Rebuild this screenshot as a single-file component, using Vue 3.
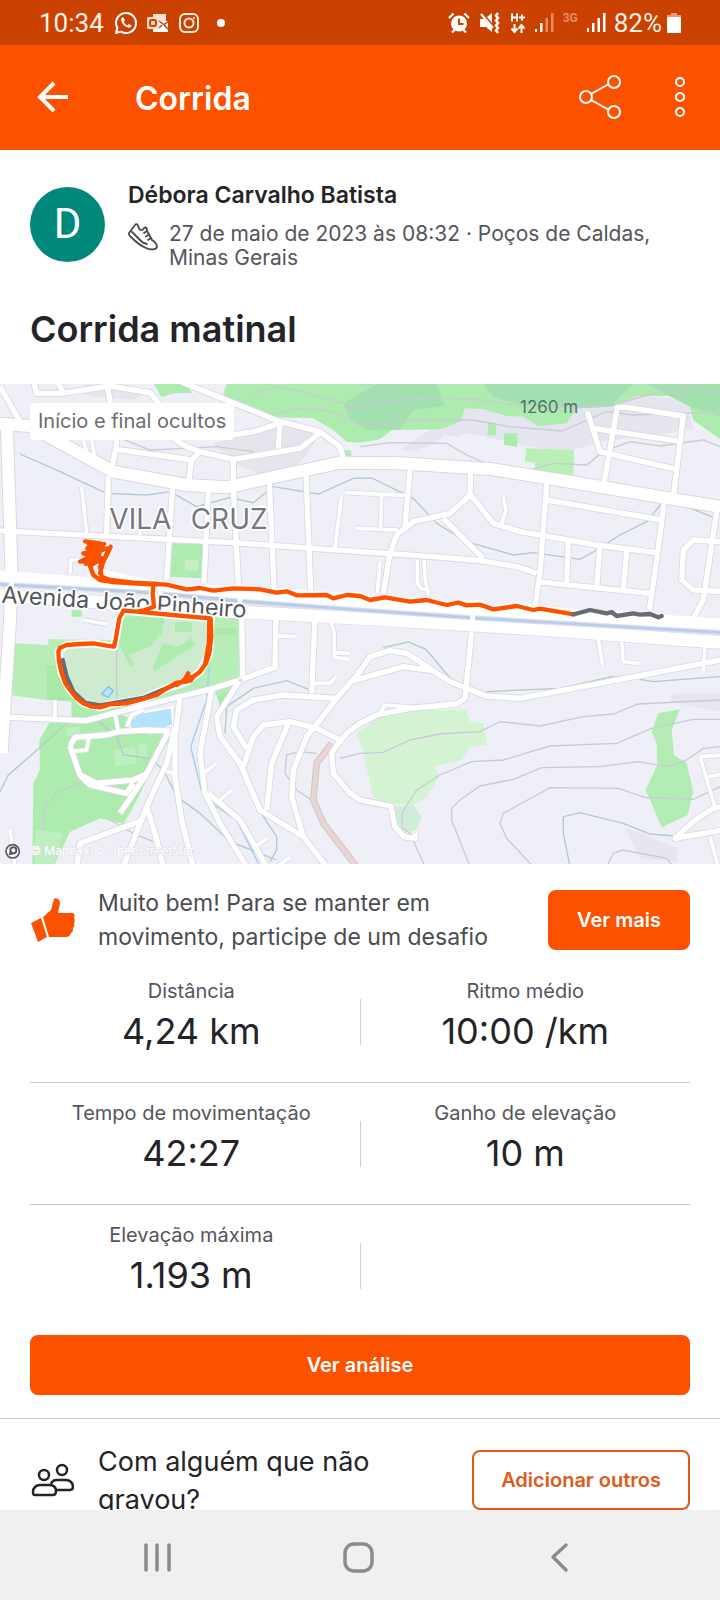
<script setup>
const stats = [
  [
    { label: 'Distância', value: '4,24 km' },
    { label: 'Ritmo médio', value: '10:00 /km' },
  ],
  [
    { label: 'Tempo de movimentação', value: '42:27' },
    { label: 'Ganho de elevação', value: '10 m' },
  ],
  [{ label: 'Elevação máxima', value: '1.193 m' }, null],
]

// Streets north of the avenue
const northStreets = [
  'M-10,452 L700,488 1080,515 1300,530 1440,542 1550,560 1610,580',
  'M0,20 L60,125',
  'M100,0 L110,40 185,40 330,18 450,38 480,75',
  'M170,0 L190,38',
  'M320,0 L350,190 330,290',
  'M545,6 L840,125 960,155 1020,200 1032,245',
  'M840,125 L835,205',
  'M350,208 L575,240 600,215 700,238 900,205 965,155',
  'M470,145 L560,200 600,215',
  'M690,166 L760,155 840,130',
  'M575,240 L565,310',
  'M700,238 L700,320',
  'M325,290 L320,465',
  'M518,320 L500,600',
  'M625,330 L612,610',
  'M700,325 L715,615',
  'M808,305 L822,625',
  'M918,280 L932,630',
  'M1230,270 L1215,440',
  'M1412,280 L1410,345 1350,400 1240,425 1190,465 1170,520 1150,640',
  'M1412,345 L1480,430 1560,455 1790,495 1970,518',
  'M1330,415 L1450,535',
  'M1640,310 L1620,580 1605,680',
  'M1640,360 L1985,420',
  'M1992,370 L1970,540 1948,690',
  'M1610,605 L1950,640',
  'M1705,485 L1700,610',
  'M1800,500 L1790,620',
  'M1880,510 L1870,630',
  'M1762,95 L1800,215 2030,268',
  'M1780,145 L2045,185',
  'M1812,310 L1852,82 1880,82 2050,108 2020,350',
  'M2170,485 L2080,480 2050,510 2045,600 2080,630 2170,635',
  'M2150,395 L2110,660 2080,715',
]
const northLanes = [
  'M250,180 L262,225', 'M275,180 L285,235', 'M245,320 L260,460', 'M420,380 L420,465',
  'M1025,345 L1005,505', 'M1035,338 L1215,346', 'M1068,445 L1195,450', 'M1145,345 L1142,445',
  'M1510,350 L1518,390 1502,440', 'M1140,545 L1132,640', 'M1252,540 L1252,610 1265,628 1280,628',
  'M1272,540 L1276,600 1285,645', 'M210,580 L212,540 250,540',
]

// Streets south of the avenue
const southStreets = [
  'M-10,290 L260,302 370,272 500,240 640,205 720,180 830,140',
  'M725,-20 L728,170',
  'M828,-20 L825,145',
  'M945,-10 L935,220',
  'M540,235 L525,350 525,470 545,600 580,740',
  'M720,180 L650,290 660,350 720,430 780,570 910,650 980,740',
  'M635,210 L600,400 615,520 660,610 740,740',
  'M525,320 L500,430 440,560 370,740',
  'M440,560 L465,640 490,740',
  'M430,600 L240,670 230,740',
  'M210,378 L225,352 320,345 355,335 440,330 510,333',
  'M210,378 L240,465 290,490 400,480 440,462',
  'M240,465 L270,495 380,520 400,490',
  'M505,335 L440,462 360,580',
  'M1010,235 L850,225 760,240 710,270 700,320 740,385',
  'M1085,150 L1010,235 960,300 920,350 880,450 875,530 910,650',
  'M730,440 L760,350 790,315 870,305 950,325 1030,365',
  'M865,310 L815,430 800,570',
  'M1008,380 L1040,340 1080,310 1130,285 1230,265 1370,252 1395,235 1415,35',
  'M1020,362 L995,400 1000,460 1050,520 1080,540 1172,558 1185,620 1212,650 1245,655 1245,640',
  'M1075,160 L1110,110 1170,92 1220,100 1350,185 1460,228 1560,235 1800,190 2170,118',
  'M1060,182 L1210,140 1300,152',
  'M2170,630 L2025,655 2085,600 2140,565 2170,560',
  'M625,520 L720,600 800,740',
]
const southLanes = [
  'M165,240 L165,300', 'M830,48 L890,50', 'M990,-5 L1003,40 1003,112 1048,118', 'M1003,98 L1050,100',
  'M940,190 L990,190 1008,170', 'M345,280 L355,335', 'M215,395 L260,390 267,350', 'M500,455 L525,460',
  'M610,460 L650,430', 'M660,540 L695,510', 'M760,685 L800,655', 'M830,740 L870,712', 'M30,630 L45,740',
  'M1140,280 L1155,255 1240,262', 'M1795,60 L1808,137', 'M1865,65 L1870,125 1918,130', 'M2115,80 L2110,155',
  'M2100,410 L2145,560', 'M2170,405 L2100,410', 'M2125,470 L2170,462', 'M2130,650 L2155,740',
  'M250,0 L320,12', 'M380,320 L395,285 430,270',
]
const northContours = [
  'M1080,75 L1200,60 1330,55 1450,60 1600,85 1830,78 1960,40 2050,20 2160,38',
  'M800,110 L880,85 980,92 1120,140 1240,118 1420,120 1530,140 1685,153 1820,95 1900,105 2160,95',
  'M760,40 L830,20 930,40 1080,85',
  'M1080,200 L1170,188 1340,190 1400,225 1470,255',
  'M1570,275 L1660,250 1760,255 1810,215 1890,185 1980,198 2110,180 2160,200',
  'M350,170 L450,210 560,205 650,200 760,215',
  'M1080,14 L1120,12',
]
const northWaterways = [
  'M60,222 L180,275 320,340 440,345 510,335 590,380 690,352 760,368 820,320 955,342 1060,295 1115,294 1240,355 1310,430 1400,485 1540,525 1600,518 1740,538 1790,510 1860,465 1940,425 1985,370 2060,380 2140,412',
]
const southContours = [
  'M1080,400 L1150,397 1230,360 1320,342 1440,335 1500,305 1620,318 1750,290 1840,282 1915,252 2160,240',
  'M1275,740 L1230,640 1205,620 1208,575 1250,510 1320,465 1415,425 1510,420 1650,378 1850,370 1955,325 2080,298 2160,298',
  'M1410,740 L1355,600 1355,565 1380,540 1440,498 1540,478 1625,443 1800,440 1915,425 2005,440 2060,420 2110,385 2160,380',
  'M1600,740 L1520,655 1500,610 1510,580 1650,503 1855,505 1935,532 2080,538 2160,500',
  'M1820,740 L1840,700 1870,690 2000,715 2020,740',
  'M130,640 L135,560 175,515 240,490',
  'M330,600 L400,640 460,665',
  'M950,400 L900,395 860,405 855,460 890,510 950,550',
  'M1020,415 L1080,400',
]
const southWaterways = [
  'M0,515 L25,465 100,400 200,310 290,300 350,350 370,405 450,415 490,450 530,530 600,580 690,665 780,700 830,720',
  'M675,340 L680,260 760,205 860,182 930,210',
  'M1150,82 L1225,66 1278,88 1355,180',
  'M1460,215 L1680,205 1835,170 1880,175',
  'M1920,178 L1960,185 2160,170',
  'M1710,740 L1690,640 1690,590 1740,578 1870,610 1950,642 2020,648',
  'M780,575 L830,650 830,690 810,725',
]
</script>

<template>
  <div class="phone">
    <div class="status">
      <span class="clock">10:34</span>
      <svg class="s-ico" width="24" height="24" viewBox="0 0 24 24" fill="none">
        <path d="M2 22l1.400-5A10 10 0 1 1 7 20.600z" stroke="#fff" stroke-width="2" stroke-linejoin="round" />
        <path d="M8.200 6.500c-.9.600-1.300 1.700-1 3 .8 3.400 4 6.600 7.600 7.200 1.400.2 2.700-.6 2.800-2.200l-3-1.500-1.300 1.400c-1.500-.6-2.800-1.900-3.500-3.400l1.100-1.400-1.200-3z" fill="#fff" />
      </svg>
      <svg class="s-ico" width="24" height="24" viewBox="0 0 24 24">
        <path d="M7 3h13v7H7z" fill="#fbe3d8" />
        <path d="M13 10h9v11H7v-4h6z" fill="#fff" />
        <path d="M13 10l5 3.500 5-3.500M13 17l3-3M23 19l-5-5" fill="none" stroke="#cb4200" stroke-width="1.500" />
        <rect x="1" y="6" width="12" height="12" rx="1.500" fill="#f6dccf" />
        <rect x="4" y="9" width="6" height="6" rx="2" fill="none" stroke="#cb4200" stroke-width="2" />
      </svg>
      <svg class="s-ico" width="24" height="24" viewBox="0 0 24 24" fill="none" stroke="#ffeadf" stroke-width="2">
        <rect x="2" y="3" width="18" height="18" rx="5" /><circle cx="11" cy="12" r="4.500" />
        <circle cx="16" cy="7" r="1" fill="#ffeadf" stroke="none" />
      </svg>
      <span class="dot"></span>
      <span class="grow"></span>
      <svg width="22" height="22" viewBox="0 0 22 22">
        <circle cx="11" cy="11.500" r="8" fill="#fff" />
        <path d="M1 6l4.500-4.500M21 6l-4.500-4.500M4 20.500l3-3M18 20.500l-3-3" stroke="#fff" stroke-width="2.200" />
        <path d="M11 6.500v5.500h4.500" fill="none" stroke="#cb4200" stroke-width="2" />
      </svg>
      <svg width="22" height="22" viewBox="0 0 22 22" fill="none" stroke="#fff">
        <path d="M1 7h4l8 8v5l-6-5H1zM8 5l5-4v10z" fill="#fff" stroke="none" />
        <path d="M2 2l12 14" stroke-width="2" />
        <path d="M19 1l-2 2.500 2 2.500-2 2.500 2 2.500-2 2.500 2 2.500-2 2.500 2 2.500" stroke-width="2.500" />
      </svg>
      <svg class="tight" width="16" height="22" viewBox="0 0 16 22" fill="none" stroke="#fff" stroke-width="2">
        <path d="M2 1.500v8M7 1.500v8M2 5.500h5M9 5.500h6M12 2.500v6" />
        <path d="M4.500 12v7M1.500 16.500l3 3.500 3-3.500M11.500 21v-7M8.500 16.500l3-3.500 3 3.500" />
      </svg>
      <svg width="20" height="20" viewBox="0 0 20 20">
        <path d="M1 16h2v3H1zM6 10h2.500v9H6z" fill="#fff" /><path d="M11.500 5H14v14h-2.500zM17 0h2.500v19H17z" fill="#e58b62" />
      </svg>
      <span class="net">3G</span>
      <svg class="tight" width="20" height="20" viewBox="0 0 20 20">
        <path d="M1 15h2v4H1zM6 10h2.500v9H6zM11.500 5H14v14h-2.500zM17 0h2.500v19H17z" fill="#fff" />
      </svg>
      <span class="battery-text">82%</span>
      <svg width="16" height="22" viewBox="0 0 16 22">
        <path d="M5 1h6v2h4v4H1V3h4z" fill="#e99a76" /><rect x="1" y="5" width="14" height="16" rx="1" fill="#fff" />
      </svg>
    </div>

    <header class="appbar">
      <button class="icon-btn back" aria-label="Voltar">
        <svg width="32" height="32" viewBox="0 0 32 32" fill="none" stroke="#fff" stroke-width="4">
          <path d="M31 16H4M17 2L3 16l14 14" />
        </svg>
      </button>
      <h1>Corrida</h1>
      <button class="icon-btn share" aria-label="Compartilhar">
        <svg width="44" height="46" viewBox="0 0 44 46" fill="none" stroke="#fff" stroke-width="2">
          <circle cx="8" cy="23" r="6" /><circle cx="36" cy="8" r="6" /><circle cx="36" cy="38" r="6" />
          <path d="M13 20l18-10M13 26l18 10" />
        </svg>
      </button>
      <button class="icon-btn" aria-label="Mais opções">
        <svg width="12" height="46" viewBox="0 0 12 46" fill="none" stroke="#fff" stroke-width="2">
          <circle cx="6" cy="8" r="4" /><circle cx="6" cy="23" r="4" /><circle cx="6" cy="38" r="4" />
        </svg>
      </button>
    </header>

    <main>
      <section class="athlete">
        <div class="avatar">D</div>
        <div class="who">
          <h2>Débora Carvalho Batista</h2>
          <div class="when">
            <svg width="30" height="30" viewBox="0 0 30 30" fill="none" stroke="#4b4b50" stroke-width="1.800" stroke-linejoin="round" stroke-linecap="round">
              <path d="M1 11L7 3c1-1.500 2.500-1 3 .5.500 3 2 5 4 4.500 1.500-.4 1.500-2.500 3-2.500 2 0 2 2 2 3.500l5 9c3 2 5 4 5 6.500 0 3-6 4-11 1.500C13 24 7 19 3 15c-1.500-1.500-2.500-3-2-4z" />
              <path d="M4 10l9 9c2 2 4 3 6 3" />
              <path d="M16 11l3-2M18 14.500l3-2M20 18l3-2" />
            </svg>
            <p>27 de maio de 2023 às 08:32 · Poços de Caldas, Minas Gerais</p>
          </div>
        </div>
      </section>

      <h2 class="title">Corrida matinal</h2>

      <section class="map">
        <svg class="map-art" viewBox="0 0 2160 1440" role="img" aria-label="Mapa do percurso">
          <rect width="2160" height="1440" fill="#eeeff7" />
          <g transform="translate(0 -12)">
            <path d="M260,12 L440,40 400,60 250,45zM640,190 L880,120 960,165 900,250 800,290 700,250z" fill="#e5e5ee" />
            <path d="M1200,210 L1395,80 1620,120 1760,75 1900,45 2060,60 2080,150 1800,185 1700,215 1330,165 1290,215z" fill="#e4e5ee" />
            <path d="M1250,210 L1400,160 1560,190 1520,260 1400,250z" fill="#eeeff7" />
            <path d="M455,0 L560,12 575,38 520,40 485,52z" fill="#aeebae" />
            <path d="M685,0 L670,40 700,78 800,110 940,115 1000,150 1040,185 1080,188 1140,178 1175,150 1320,148 1380,125 1395,85 1450,88 1520,108 1570,110 1615,138 1700,130 1730,85 1830,80 1910,48 2010,48 2065,70 2080,120 2160,178 2160,0z" fill="#aeebae" />
            <path d="M1030,70 L1130,12 1310,12 1335,78 1240,90 1200,148 1100,150 1050,120zM1450,12 L1900,12 1830,80 1730,85 1560,75 1480,50zM1940,12 L2160,12 2160,110 2070,80z" fill="#a4dfaf" />
            <path d="M1465,128h23v38h-26zM1512,160h40v40l-40,-5zM1032,210l22,2 0,18 -20,0z" fill="#aeebae" />
            <path d="M1578,205 L1722,210 1720,288 1605,280 1605,248 1575,245z" fill="#b9f0b5" />
            <path d="M515,490 L610,492 605,595 510,590zM215,690h30v20h-30z" fill="#aeebae" />
            <path d="M555,540h40v32h-40z" fill="#c6efc6" />
            <path v-for="d in northContours" :key="d" :d="d" class="contour" />
            <path v-for="d in northWaterways" :key="d" :d="d" class="stream" />
          </g>
          <g transform="translate(0 708)">
            <path d="M40,70 L145,75 145,58 350,60 360,-20 635,-20 720,-10 722,150 690,235 660,262 645,210 500,240 260,302 215,300 215,245 140,240 30,225z" fill="#b7edb7" />
            <path d="M140,135 L190,140 250,240 140,240zM645,25 L710,25 710,45 645,45zM650,230 L700,210 665,262z" fill="#a8e8a8" />
            <path d="M150,305 L215,305 215,240 350,245 350,280 520,335 440,480 400,560 370,612 300,595 210,635 160,740 97,740 100,490 120,450 118,360z" fill="#aeebae" />
            <path d="M108,630 L190,640 160,740 102,740zM340,390 L405,380 410,430 345,440zM412,375 L438,370 445,410 418,412zM195,325 L240,320 242,345 200,348z" fill="#beefbe" />
            <path d="M355,0 L632,-12 628,100 600,155 500,205 330,250 250,245 190,160 180,90 200,75 340,78z" fill="#cfebcf" />
            <path d="M365,-5 L495,-10 485,40 450,80 385,105 402,130 392,142 350,60zM490,70 L530,82 575,55 585,75 465,152 458,145zM525,5h50v30h-50z" fill="#aeebae" />
            <path d="M305,222 L325,200 340,212 325,232z" class="pond" />
            <path d="M390,300 L415,280 515,262 520,315 450,340 390,325z" fill="#b5e3fa" stroke="#fff" stroke-width="6" />
            <path d="M1070,340 L1140,290 1240,270 1400,270 1410,305 1450,310 1462,375 1410,380 1385,420 1300,440 1320,465 1280,530 1240,555 1150,550 1120,530 1090,400z" fill="#d3f3d3" />
            <path d="M1185,560 L1240,555 1265,590 1250,630 1210,640 1190,610z" fill="#cfeeda" />
            <path d="M1975,280 L2040,268 2015,330 2022,405 2060,430 2080,515 2063,585 1985,622 1937,510 1972,435 1970,370 1955,335z" fill="#b2ecb4" />
            <path d="M2012,222 L2160,218 2160,275 2010,245zM1875,622 L2035,685 2030,725 1920,715z" fill="#e7e6ef" />
            <path v-for="d in southContours" :key="d" :d="d" class="contour" />
            <path v-for="d in southWaterways" :key="d" :d="d" class="stream" />
            <path d="M628,140 L620,240 572,380 605,515 650,560 710,600 780,740" class="creek" />
            <path d="M350,80 L350,250" class="contour" />
            <path d="M995,370 L950,430 940,540 970,610 1070,740" class="trail-edge" />
            <path d="M995,370 L950,430 940,540 970,610 1070,740" class="trail" />
          </g>
          <g transform="translate(0 -12)" class="roads">
            <path v-for="d in northLanes" :key="d" :d="d" class="lane-edge" />
            <path v-for="d in northStreets" :key="d" :d="d" class="street-edge" />
          </g>
          <g transform="translate(0 708)" class="roads">
            <path v-for="d in southLanes" :key="d" :d="d" class="lane-edge" />
            <path v-for="d in southStreets" :key="d" :d="d" class="street-edge" />
          </g>
          <g transform="translate(0 -12)" class="roads">
            <path d="M20,120 L35,590 30,720 5,1120" class="main-edge" />
            <path d="M-20,130 L90,138 340,275 560,315 680,322 1020,248 1200,250 1480,268 1750,312 2170,382" class="main-edge" />
            <path d="M-20,645 L740,697 1080,715 1620,748 2170,788" class="main-edge" />
            <path v-for="d in northLanes" :key="d" :d="d" class="lane" />
            <path v-for="d in northStreets" :key="d" :d="d" class="street" />
          </g>
          <g transform="translate(0 708)" class="roads">
            <path v-for="d in southLanes" :key="d" :d="d" class="lane" />
            <path v-for="d in southStreets" :key="d" :d="d" class="street" />
            <circle cx="722" cy="181" r="6" fill="#dcdce6" />
          </g>
          <g transform="translate(0 -12)" class="roads">
            <path d="M20,120 L35,590 30,720 5,1120" class="main" />
            <path d="M-20,130 L90,138 340,275 560,315 680,322 1020,248 1200,250 1480,268 1750,312 2170,382" class="main" />
            <path d="M-20,645 L740,697 1080,715 1620,748 2170,788" class="avenue" />
            <path d="M-20,588 L470,627 1080,668 1640,700 2170,735" class="avenue" />
            <path d="M-20,612 L450,638 740,665 1080,690 1440,715 2170,758" class="canal-edge" />
            <path d="M-20,612 L450,638 740,665 1080,690 1440,715 2170,758" class="canal" />
            <path d="M35,590v50M480,625v40M720,650v30M1418,700v30" class="bridge" />
          </g>

          <text y="434" class="map-label district"><tspan x="328">VILA</tspan> <tspan x="572">CRUZ</tspan></text>
          <text x="1560" y="86" class="elevation">1260 m</text>
          <text x="4" y="656" class="map-label road" transform="rotate(3.500 4 656)">Avenida João Pinheiro</text>

          <g transform="translate(0 -12)" class="route">
            <path d="M460,615 L458,640 462,680 435,690 410,695 370,692 358,715 350,760 342,800 280,790 200,795 175,815 185,880 210,930 250,970 300,982 330,973 430,957 500,925 560,905 600,875 628,820 632,715 550,708 410,695" class="halo" />
            <path d="M300,580 L470,615 560,628 700,628 830,636 980,647 1080,648 1110,660 1230,665 1340,675 1430,672 1480,688 1550,678 1720,702 1985,710" class="halo" />
            <path d="M188,840 L200,890 220,935 255,968 300,976 430,954 530,912" class="hidden-part" />
            <path d="M460,615 L458,640 462,680 435,690 410,695 370,692 358,715 350,760 346,785 342,800 320,797 280,790 240,792 200,795 180,803 175,815 177,845 185,880 196,910 210,930 230,955 250,970 275,980 300,982 330,973 380,970 430,957 470,945 500,925 530,908 560,905 600,875 618,850 628,820 634,770 632,715 550,708 410,695" class="line" />
            <path d="M530,915 L560,895 580,890 572,902 555,900 565,880 550,905M628,720L626,790 616,850" class="line" />
            <path d="M255,484 L300,490 262,505 312,492 268,525 320,505 250,520 300,540 240,545 290,522 258,552 305,535 270,558 280,585 300,600 340,606 460,614M332,500 L318,530 300,560 305,590 330,600 400,608 470,612M325,510 L308,550 300,580M270,500 L300,515 275,540M265,490 L285,530 M300,495 L295,545M258,540 L300,515" class="line" />
            <path d="M460,612 L500,614 560,628 600,624 640,632 700,625 780,628 830,638 860,634 890,646 980,645 1000,655 1040,645 1080,648 1110,660 1155,652 1230,665 1280,660 1340,675 1375,668 1400,676 1440,674 1480,688 1550,678 1600,690 1620,686 1722,703" class="line" />
            <path d="M1720,703 L1770,690 1820,700 1835,696 1850,708 1900,700 1920,704 1950,702 1975,712 1985,708" class="line hidden" />
          </g>
          <g fill="none">
            <circle cx="38" cy="1402" r="20" fill="#fff" stroke="#5a5a62" stroke-width="5" />
            <circle cx="40" cy="1399" r="9" stroke="#5a5a62" stroke-width="6" />
            <path d="M26,1414 L30,1398 42,1411z" fill="#5a5a62" />
          </g>
          <text x="90" y="1412" class="credit">© Mapbox © OpenStreetMap</text>
        </svg>
        <span class="hidden-tag">Início e final ocultos</span>
      </section>

      <section class="prompt">
        <svg width="45" height="46" viewBox="0 0 45 46" fill="#fc5200">
          <path d="M1 26l10-5 6 19-9 5z" />
          <path d="M13 20l8-7 3-11c1-2 6 0 6 4l-2 10h14c3 0 3 3 2 5 1 1 1 4 0 5 1 2 0 4-1 5 0 2 0 4-2 5-1 3-3 4-5 4H19z" />
        </svg>
        <p>Muito bem! Para se manter em movimento, participe de um desafio</p>
        <button class="primary">Ver mais</button>
      </section>

      <section class="stats">
        <div v-for="(row, i) in stats" :key="i" class="stat-row">
          <template v-for="(cell, j) in row" :key="j">
            <span v-if="j" class="split"></span>
            <div class="stat">
              <template v-if="cell">
                <span class="label">{{ cell.label }}</span>
                <span class="value">{{ cell.value }}</span>
              </template>
            </div>
          </template>
        </div>
      </section>

      <div class="analysis"><button class="primary">Ver análise</button></div>

      <section class="others">
        <svg width="44" height="36" viewBox="0 0 44 36" fill="none" stroke="#242428" stroke-width="2.500" stroke-linejoin="round">
          <circle cx="14" cy="12" r="5" /><circle cx="32" cy="7" r="5" />
          <path d="M3 29c0-4 3-7 7-7h9c4 0 7 2 7 6 0 3-1 4-3 4H5c-2 0-2-1-2-3z" />
          <path d="M21 21c1-3 3-4 6-4h9c4 0 7 3 7 7 0 2-1 3-3 3H27" />
        </svg>
        <p>Com alguém que não gravou?</p>
        <button class="outline">Adicionar outros</button>
      </section>
    </main>

    <nav class="sysnav">
      <button class="icon-btn" aria-label="Recentes">
        <svg width="32" height="32" viewBox="0 0 32 32" stroke="#8b8b8b" stroke-width="3.500" stroke-linecap="round"><path d="M5 4v25M16 4v25M28 4v25" /></svg>
      </button>
      <button class="icon-btn" aria-label="Início">
        <svg width="32" height="32" viewBox="0 0 32 32" fill="none" stroke="#8b8b8b" stroke-width="3.500"><rect x="3" y="3" width="27" height="27" rx="9" /></svg>
      </button>
      <button class="icon-btn" aria-label="Voltar">
        <svg width="32" height="32" viewBox="0 0 32 32" fill="none" stroke="#8b8b8b" stroke-width="3.500" stroke-linecap="round" stroke-linejoin="round"><path d="M23 4L10 16l13 13" /></svg>
      </button>
    </nav>
  </div>
</template>

<style>
body { background: #fff; }
</style>

<style scoped>
* { box-sizing: border-box; }
h1, h2, p { margin: 0; }
svg { display: block; flex: none; }
button { font: inherit; cursor: pointer; }
.phone {
  height: 100vh;
  display: flex;
  flex-direction: column;
  font-family: Inter, "Liberation Sans", sans-serif;
  color: #242428;
  background: #fff;
}
.status {
  flex: none;
  height: 45px;
  padding: 0 38px 0 39px;
  display: flex;
  align-items: center;
  background: #cb4200;
  color: #fff1ea;
  font-family: Roboto, sans-serif;
}
.clock, .battery-text { font-size: 26px; line-height: 32px; }
.clock { margin-right: 2px; }
.s-ico { margin-left: 8px; }
.dot { width: 8px; height: 8px; margin-left: 15px; border-radius: 50%; background: #fff; }
.grow { flex: 1; }
.status > .grow ~ svg { margin-right: 9px; }
.status > .grow ~ .tight { margin-right: 8px; }
.status > .battery-text ~ svg { margin-right: 0; }
.net { margin-right: 8px; align-self: flex-start; margin-top: 10px; font-size: 12px; line-height: 16px; font-weight: 700; color: #e58b62; }
.battery-text { margin-right: 4px; }
.appbar {
  flex: none;
  height: 105px;
  padding: 0 34px 2px 37px;
  display: flex;
  align-items: center;
  background: #fc5200;
  color: #fff;
}
.appbar h1 { flex: 1; padding-top: 4px; font-size: 32px; line-height: 40px; font-weight: 600; }
.icon-btn { padding: 0; border: 0; background: none; }
.back { margin-right: 66px; }
.share { margin-right: 52px; }
main { flex: 1; min-height: 0; overflow: hidden; }
.athlete { display: flex; align-items: center; gap: 23px; padding: 28px 30px 0; }
.avatar {
  flex: none;
  width: 75px;
  height: 75px;
  border-radius: 50%;
  display: grid;
  place-items: center;
  background: #00897b;
  color: #fff;
  font: 42px/48px Roboto, sans-serif;
}
.who { flex: 1; padding-top: 2px; }
.who h2 { font-size: 23px; line-height: 30px; font-weight: 600; }
.when { display: flex; align-items: flex-start; gap: 11px; margin-top: 12px; }
.when p { font-size: 21px; line-height: 24px; color: #55555b; }
.title { padding: 35px 30px 31px; font-size: 36px; line-height: 48px; font-weight: 600; }
.map { position: relative; }
.map-art { width: 100%; height: auto; }
.hidden-tag {
  position: absolute;
  left: 30px;
  top: 19px;
  padding: 4px 8px;
  border-radius: 4px;
  background: #fff;
  color: #6b6b70;
  font-size: 20px;
  line-height: 29px;
}
.contour { fill: none; stroke: #c9cbd5; stroke-width: 4; }
.stream { fill: none; stroke: #b5c8ca; stroke-width: 4; }
.creek { fill: none; stroke: #9fd0ef; stroke-width: 4; }
.pond { fill: #b5e3fa; stroke: #7fc0ea; stroke-width: 4; }
.trail-edge { fill: none; stroke: #d8c4c4; stroke-width: 20; }
.trail { fill: none; stroke: #e6d6d5; stroke-width: 14; }
.roads path { fill: none; stroke-linejoin: round; }
.roads .lane-edge { stroke: #dcdce6; stroke-width: 16; }
.roads .lane { stroke: #fff; stroke-width: 11; }
.roads .street-edge { stroke: #d8d8e2; stroke-width: 21; }
.roads .street { stroke: #fff; stroke-width: 16; }
.roads .main-edge { stroke: #d8d8e2; stroke-width: 42; }
.roads .main { stroke: #fff; stroke-width: 36; }
.roads .avenue { stroke: #fff; stroke-width: 38; }
.roads .bridge { stroke: #fff; stroke-width: 14; }
.roads .canal-edge { stroke: #dadff0; stroke-width: 15; }
.roads .canal { stroke: #b9cde6; stroke-width: 8; }
.map-label { paint-order: stroke; stroke: #fff; stroke-width: 10; stroke-linejoin: round; }
.district { font-size: 84px; fill: #77777f; }
.road { font-size: 70px; fill: #55555d; }
.elevation { font-size: 51px; fill: #4f7566; }
.credit { font-size: 36px; fill: #fff; stroke: #dedee6; stroke-width: 3; paint-order: stroke; }
.route path { fill: none; stroke-linejoin: round; stroke-linecap: round; }
.route .halo { stroke: #fff; stroke-width: 24; }
.route .line { stroke: #fc5200; stroke-width: 13; }
.route .hidden, .route .hidden-part { stroke: #6b6b75; stroke-width: 13; }
.prompt { display: flex; align-items: center; gap: 23px; padding: 21px 30px 22px; }
.prompt p { flex: 1; padding-top: 1px; font-size: 23px; line-height: 34px; color: #4b4b50; }
.primary, .outline {
  height: 60px;
  padding: 0 27px;
  border: 2px solid #fc5200;
  border-radius: 8px;
  background: #fc5200;
  color: #fff;
  font-size: 20px;
  line-height: 26px;
  font-weight: 600;
  white-space: nowrap;
}
.outline { background: #fff; border-color: #dd5a1b; color: #dd5a1b; }
.stats { padding: 0 30px; }
.stat-row {
  display: grid;
  grid-template-columns: 1fr 1px 1fr;
  align-items: end;
  height: 122px;
  padding-bottom: 24px;
  border-bottom: 1px solid #c8c8cc;
}
.stat-row:first-child { height: 107px; }
.stat-row:last-child { border-bottom-color: transparent; }
.stat { display: flex; flex-direction: column; align-items: center; }
.stat:first-child { padding-right: 7px; }
.split { width: 1px; height: 46px; margin-bottom: 13px; background: #d0d0d4; }
.label { font-size: 20px; line-height: 26px; color: #55555b; }
.value { font-size: 36px; line-height: 54px; }
.analysis { padding: 8px 30px 23px; border-bottom: 1px solid #c8c8cc; }
.analysis .primary { width: 100%; }
.others { display: flex; align-items: flex-start; gap: 24px; padding: 24px 30px; }
.others svg { margin-top: 20px; }
.others p { flex: 1; padding-right: 50px; font-size: 27px; line-height: 38px; }
.others .outline { margin-top: 7px; }
.sysnav {
  flex: none;
  height: 90px;
  padding: 4px 60px 0 56px;
  display: flex;
  justify-content: space-around;
  align-items: center;
  background: #f0f0f0;
}
</style>
